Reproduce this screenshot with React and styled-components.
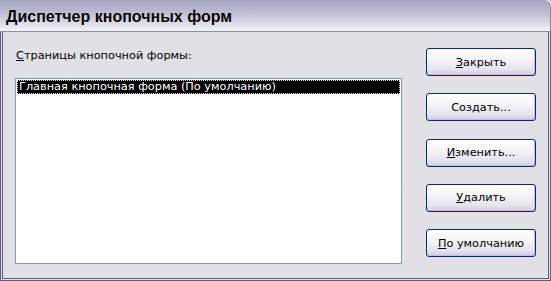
import styled, { createGlobalStyle } from "styled-components";

const GlobalStyle = createGlobalStyle`
  html, body {
    margin: 0;
    padding: 0;
    background: #ffffff;
  }
  * {
    box-sizing: border-box;
  }
`;

const buttons = [
  { key: "З", rest: "акрыть" },
  { pre: "Соз", key: "д", rest: "ать..." },
  { key: "И", rest: "зменить..." },
  { key: "У", rest: "далить" },
  { key: "П", rest: "о умолчанию" },
];

const App = () => {
  return (
    <>
      <GlobalStyle />
      <Window>
        <TitleBar>
          <Title>Диспетчер кнопочных форм</Title>
        </TitleBar>
        <Body>
          <LeftColumn>
            <Label>
              <u>С</u>траницы кнопочной формы:
            </Label>
            <ListBox>
              <ListItem selected>Главная кнопочная форма (По умолчанию)</ListItem>
            </ListBox>
          </LeftColumn>
          <ButtonColumn>
            {buttons.map((b, i) => (
              <Button key={i}>
                {b.pre}
                <u>{b.key}</u>
                {b.rest}
              </Button>
            ))}
          </ButtonColumn>
        </Body>
      </Window>
    </>
  );
};

export default App;

const Window = styled.div`
  width: 551px;
  height: 281px;
  display: flex;
  flex-direction: column;
  background: #d9d9e4;
  font-family: "DejaVu Sans", "Liberation Sans", sans-serif;
`;

const TitleBar = styled.div`
  height: 32px;
  flex-shrink: 0;
  display: flex;
  align-items: center;
  padding: 3px 0 0 6px;
  border-top-right-radius: 8px;
  border-right: 1px solid #8a8aa8;
  border-bottom: 1px solid #8c8ca6;
  background: linear-gradient(
    to bottom,
    #a6a6c2 0%,
    #b8b8d0 35%,
    #dcdce8 75%,
    #f2f2f6 100%
  );
`;

const Title = styled.div`
  font-family: "Liberation Sans", "DejaVu Sans", sans-serif;
  font-size: 16px;
  font-weight: bold;
  color: #000;
  text-shadow: 0 0 1px rgba(255, 255, 255, 0.6);
`;

const Body = styled.div`
  flex: 1;
  display: flex;
  justify-content: space-between;
  padding: 15px 12px 0 12px;
  background: #e1e0e6;
  border: 3px double #5c5c7c;
  border-top: none;
`;

const LeftColumn = styled.div`
  display: flex;
  flex-direction: column;
  width: 387px;
`;

const Label = styled.div`
  font-size: 11.3px;
  line-height: 16px;
  height: 16px;
  color: #000;
  margin: 1px 0 14px 1px;
`;

const ListBox = styled.div`
  height: 186px;
  background: #fff;
  border: 1px solid #7f9db9;
  padding: 1px;
`;

const ListItem = styled.div`
  font-size: 11.3px;
  line-height: 14px;
  padding: 0 2px;
  white-space: nowrap;
  color: ${(p) => (p.selected ? "#ffffff" : "#000")};
  background: ${(p) => (p.selected ? "#000000" : "transparent")};
  outline: ${(p) => (p.selected ? "1px dotted #f0e070" : "none")};
  outline-offset: -1px;
`;

const ButtonColumn = styled.div`
  width: 110px;
  display: flex;
  flex-direction: column;
  gap: 17.25px;
  padding-top: 1px;
`;

const Button = styled.button`
  height: 28px;
  width: 110px;
  padding: 0;
  border: 1px solid #0f2a6a;
  border-radius: 3px;
  font-family: "DejaVu Sans", "Liberation Sans", sans-serif;
  font-size: 11.3px;
  color: #000;
  background: linear-gradient(
    to bottom,
    #ffffff 0%,
    #f4f4f8 40%,
    #e4e2ee 80%,
    #cfcde0 100%
  );
  box-shadow: inset -1px -1px 0 #c0bed4;
`;
